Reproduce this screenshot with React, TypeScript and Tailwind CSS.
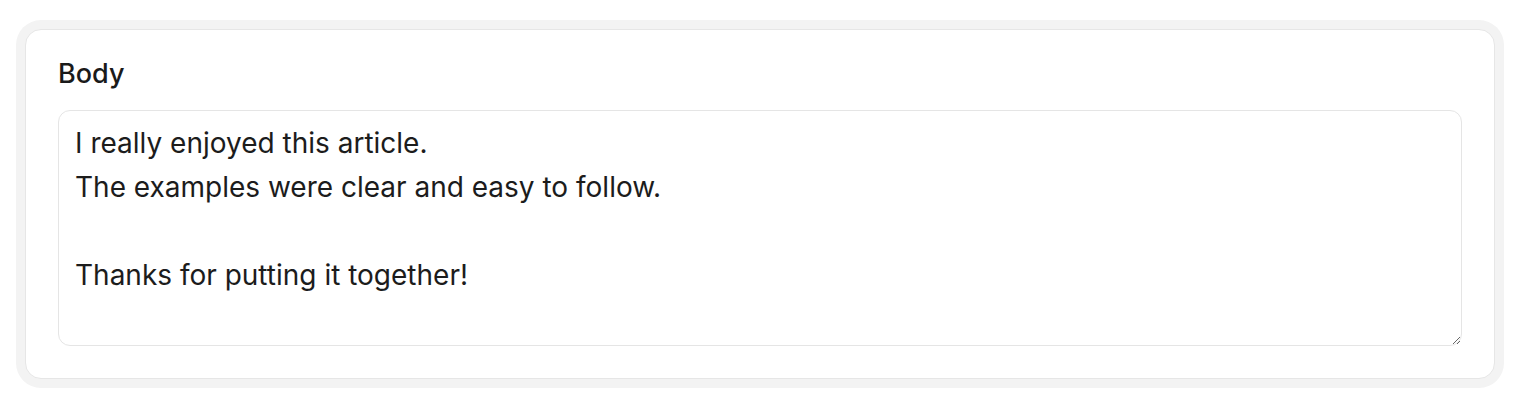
import React, { useState } from "react";

const initialBody = [
  "I really enjoyed this article.",
  "The examples were clear and easy to follow.",
  "",
  "Thanks for putting it together!",
].join("\n");

const CommentBodyField = () => {
  const [body, setBody] = useState(initialBody);

  return (
    <div className="rounded-[16px] border border-[#e6e6e6] bg-white px-[32px] pt-[24px] pb-[32px] ring-[9px] ring-[#f3f3f3]">
      <label
        htmlFor="comment-body"
        className="block text-[27px] leading-[39px] font-medium text-[#1a1a1a]"
      >
        Body
      </label>
      <textarea
        id="comment-body"
        value={body}
        onChange={(e) => setBody(e.target.value)}
        className="mt-[17px] block h-[236px] w-full rounded-[12px] border border-[#e5e5e5] bg-white px-[16px] py-[10px] text-[28px] leading-[44px] text-[#1c1c1c] outline-none"
      />
    </div>
  );
};

export default function App() {
  return (
    <div
      className="min-h-[408px] bg-white px-[25px] py-[29px]"
      style={{ fontFamily: "Inter, 'Noto Sans', sans-serif" }}
    >
      <CommentBodyField />
    </div>
  );
}
